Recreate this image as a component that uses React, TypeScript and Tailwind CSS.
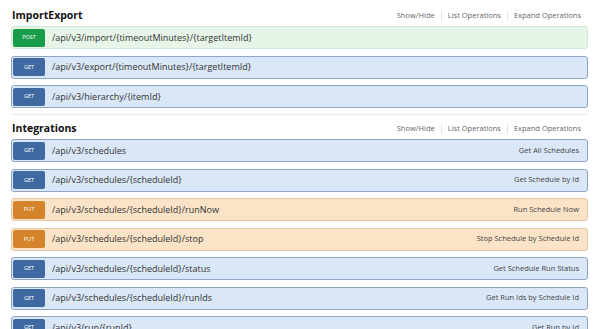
import React from "react";

type Method = "GET" | "POST" | "PUT";
type Op = { m: Method; path: string; desc?: string };

const styles: Record<Method, { row: string; badge: string }> = {
  GET: { row: "bg-[#dae7f7] border-[#8ea5c6]", badge: "bg-[#3e69a1]" },
  POST: { row: "bg-[#e6f5e8] border-[#cfe9d4]", badge: "bg-[#1a9d4b]" },
  PUT: { row: "bg-[#fbe3c8] border-[#e6c9a0]", badge: "bg-[#d4842b]" },
};

function Row({ op }: { op: Op }) {
  const s = styles[op.m];
  return (
    <div className={`flex items-center h-[23px] border rounded-[3px] pl-[1px] pr-[8px] ${s.row}`}>
      <div className={`w-[32px] h-[18px] rounded-[2px] flex items-center justify-center text-white text-[5.5px] ${s.badge}`}>
        {op.m}
      </div>
      <div className="ml-[7px] text-[9px] text-[#333]">{op.path}</div>
      <div className="ml-auto text-[7.5px] text-[#444]">{op.desc}</div>
    </div>
  );
}

function Section({ title, ops, first }: { title: string; ops: Op[]; first?: boolean }) {
  return (
    <div className={first ? "" : "border-t border-[#ececec] mt-[6px]"}>
      <div className={`flex items-center justify-between ${first ? "h-[20px]" : "h-[24px] pt-[3px]"}`}>
        <div className="text-[10.5px] font-bold text-[#111] pl-[1px]">{title}</div>
        <div className="flex items-center text-[7.5px] text-[#666] pr-[7px]">
          <span>Show/Hide</span>
          <span className="mx-[6px] w-px h-[10px] bg-[#e2e2e2]" />
          <span>List Operations</span>
          <span className="mx-[6px] w-px h-[10px] bg-[#e2e2e2]" />
          <span>Expand Operations</span>
        </div>
      </div>
      <div className="flex flex-col gap-[6.5px]">
        {ops.map((o, i) => (
          <Row key={i} op={o} />
        ))}
      </div>
    </div>
  );
}

export default function App() {
  return (
    <div
      className="w-[600px] h-[329px] overflow-hidden bg-white pl-[11px] pr-[12px] pt-[6px]"
      style={{ fontFamily: '"Open Sans", "Noto Sans", sans-serif' }}
    >
      <Section
        first
        title="ImportExport"
        ops={[
          { m: "POST", path: "/api/v3/import/{timeoutMinutes}/{targetItemId}" },
          { m: "GET", path: "/api/v3/export/{timeoutMinutes}/{targetItemId}" },
          { m: "GET", path: "/api/v3/hierarchy/{itemId}" },
        ]}
      />
      <Section
        title="Integrations"
        ops={[
          { m: "GET", path: "/api/v3/schedules", desc: "Get All Schedules" },
          { m: "GET", path: "/api/v3/schedules/{scheduleId}", desc: "Get Schedule by Id" },
          { m: "PUT", path: "/api/v3/schedules/{scheduleId}/runNow", desc: "Run Schedule Now" },
          { m: "PUT", path: "/api/v3/schedules/{scheduleId}/stop", desc: "Stop Schedule by Schedule Id" },
          { m: "GET", path: "/api/v3/schedules/{scheduleId}/status", desc: "Get Schedule Run Status" },
          { m: "GET", path: "/api/v3/schedules/{scheduleId}/runIds", desc: "Get Run Ids by Schedule Id" },
          { m: "GET", path: "/api/v3/run/{runId}", desc: "Get Run by Id" },
        ]}
      />
    </div>
  );
}
